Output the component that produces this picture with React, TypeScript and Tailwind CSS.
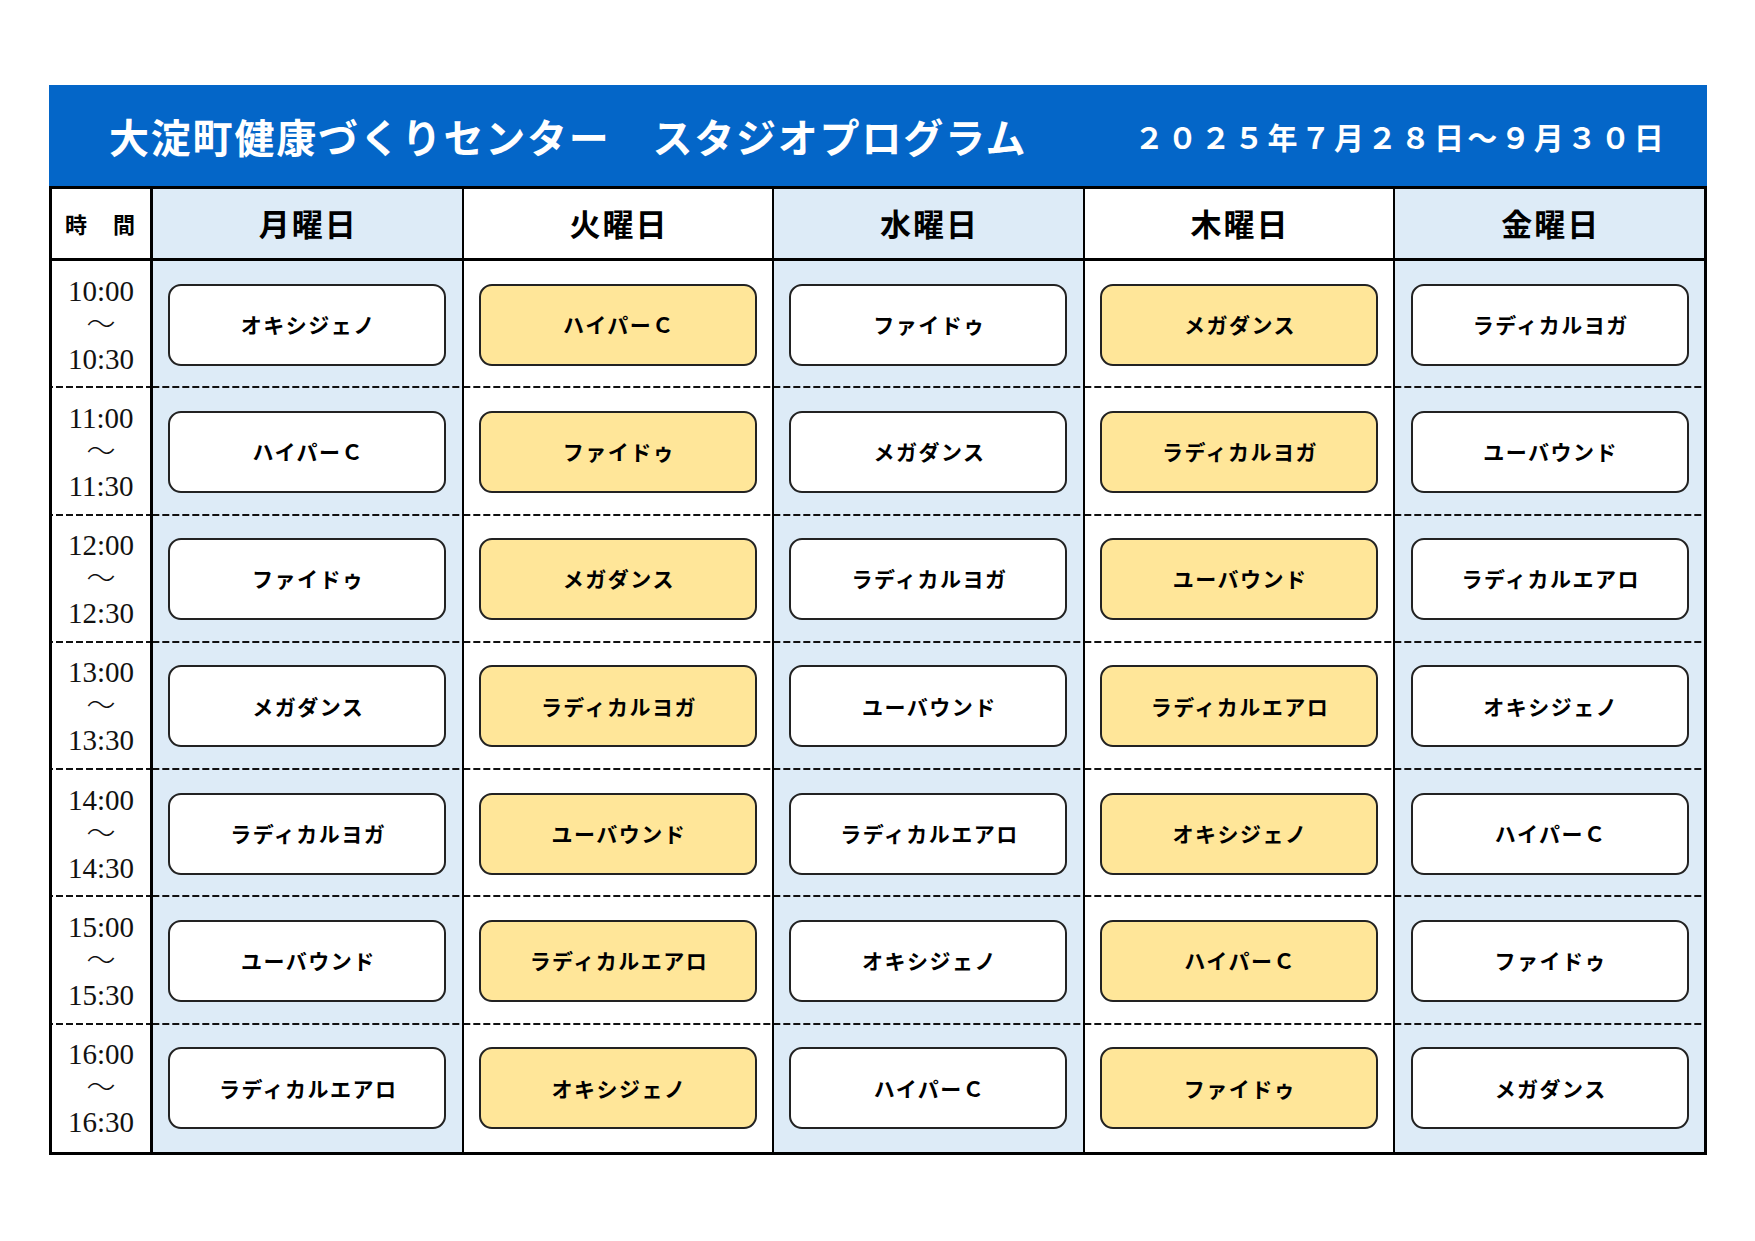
const days = ["月曜日", "火曜日", "水曜日", "木曜日", "金曜日"];

const slots = [
  { from: "10:00", to: "10:30", items: ["オキシジェノ", "ハイパーＣ", "ファイドゥ", "メガダンス", "ラディカルヨガ"] },
  { from: "11:00", to: "11:30", items: ["ハイパーＣ", "ファイドゥ", "メガダンス", "ラディカルヨガ", "ユーバウンド"] },
  { from: "12:00", to: "12:30", items: ["ファイドゥ", "メガダンス", "ラディカルヨガ", "ユーバウンド", "ラディカルエアロ"] },
  { from: "13:00", to: "13:30", items: ["メガダンス", "ラディカルヨガ", "ユーバウンド", "ラディカルエアロ", "オキシジェノ"] },
  { from: "14:00", to: "14:30", items: ["ラディカルヨガ", "ユーバウンド", "ラディカルエアロ", "オキシジェノ", "ハイパーＣ"] },
  { from: "15:00", to: "15:30", items: ["ユーバウンド", "ラディカルエアロ", "オキシジェノ", "ハイパーＣ", "ファイドゥ"] },
  { from: "16:00", to: "16:30", items: ["ラディカルエアロ", "オキシジェノ", "ハイパーＣ", "ファイドゥ", "メガダンス"] },
];

// dashed row separator drawn as a background strip at the cell's bottom
const dashed =
  "bg-[image:linear-gradient(to_right,#111_72%,transparent_72%)] bg-[length:10px_2px] bg-repeat-x bg-bottom";

function ClassBox({ name, yellow }: { name: string; yellow: boolean }) {
  return (
    <div
      className={`w-[278px] h-[82px] rounded-[13px] border-2 border-[#222] flex items-center justify-center pl-[2px] text-[21px] font-bold tracking-[1.5px] text-black ${
        yellow ? "bg-[#ffe699]" : "bg-white"
      }`}
    >
      {name}
    </div>
  );
}

export default function App() {
  return (
    <div className="w-[1755px] h-[1241px] bg-white font-['Noto_Sans_CJK_JP',sans-serif]">
      <div className="pt-[85px] pl-[49px] w-[1707px]">
        {/* Title bar */}
        <div className="h-[101px] bg-[#0466c8] flex items-center justify-between pl-[60px] pr-[40px] text-white font-bold">
          <div className="text-[40px] tracking-[1.8px] leading-none">
            大淀町健康づくりセンター　スタジオプログラム
          </div>
          <div className="text-[30px] tracking-[3.3px] leading-none">
            ２０２５年７月２８日～９月３０日
          </div>
        </div>

        {/* Timetable */}
        <div className="border-[3px] border-black">
          {/* Header row */}
          <div className="flex h-[72px] border-b-[3px] border-black">
            <div className="w-[101px] border-r-[3px] border-black bg-white flex items-center justify-center text-[22px] font-bold tracking-[2px]">
              時　間
            </div>
            {days.map((d, i) => (
              <div
                key={d}
                className={`flex-1 flex items-center justify-center pl-[2px] text-[31px] font-bold tracking-[2px] ${
                  i > 0 ? "border-l-2 border-black" : ""
                } ${i % 2 === 0 ? "bg-[#ddebf7]" : "bg-white"}`}
              >
                {d}
              </div>
            ))}
          </div>

          {/* Time slots */}
          <div className="flex flex-col h-[891px]">
            {slots.map((s, r) => {
              const last = r === slots.length - 1;
              return (
                <div key={s.from} className="flex flex-1">
                  <div
                    className={`w-[101px] border-r-[3px] border-black bg-white flex flex-col items-center justify-center font-['Liberation_Serif',serif] text-[29px] leading-[34px] text-[#111] ${
                      last ? "" : dashed
                    }`}
                  >
                    <span>{s.from}</span>
                    <span className="font-['Liberation_Serif','Noto_Sans_CJK_JP',serif] font-light">～</span>
                    <span>{s.to}</span>
                  </div>
                  {s.items.map((name, i) => (
                    <div
                      key={i}
                      className={`flex-1 flex items-center justify-center ${
                        i > 0 ? "border-l-2 border-black" : ""
                      } ${i % 2 === 0 ? "bg-[#ddebf7]" : "bg-white"} ${last ? "" : dashed}`}
                    >
                      <ClassBox name={name} yellow={i % 2 === 1} />
                    </div>
                  ))}
                </div>
              );
            })}
          </div>
        </div>
      </div>
    </div>
  );
}
